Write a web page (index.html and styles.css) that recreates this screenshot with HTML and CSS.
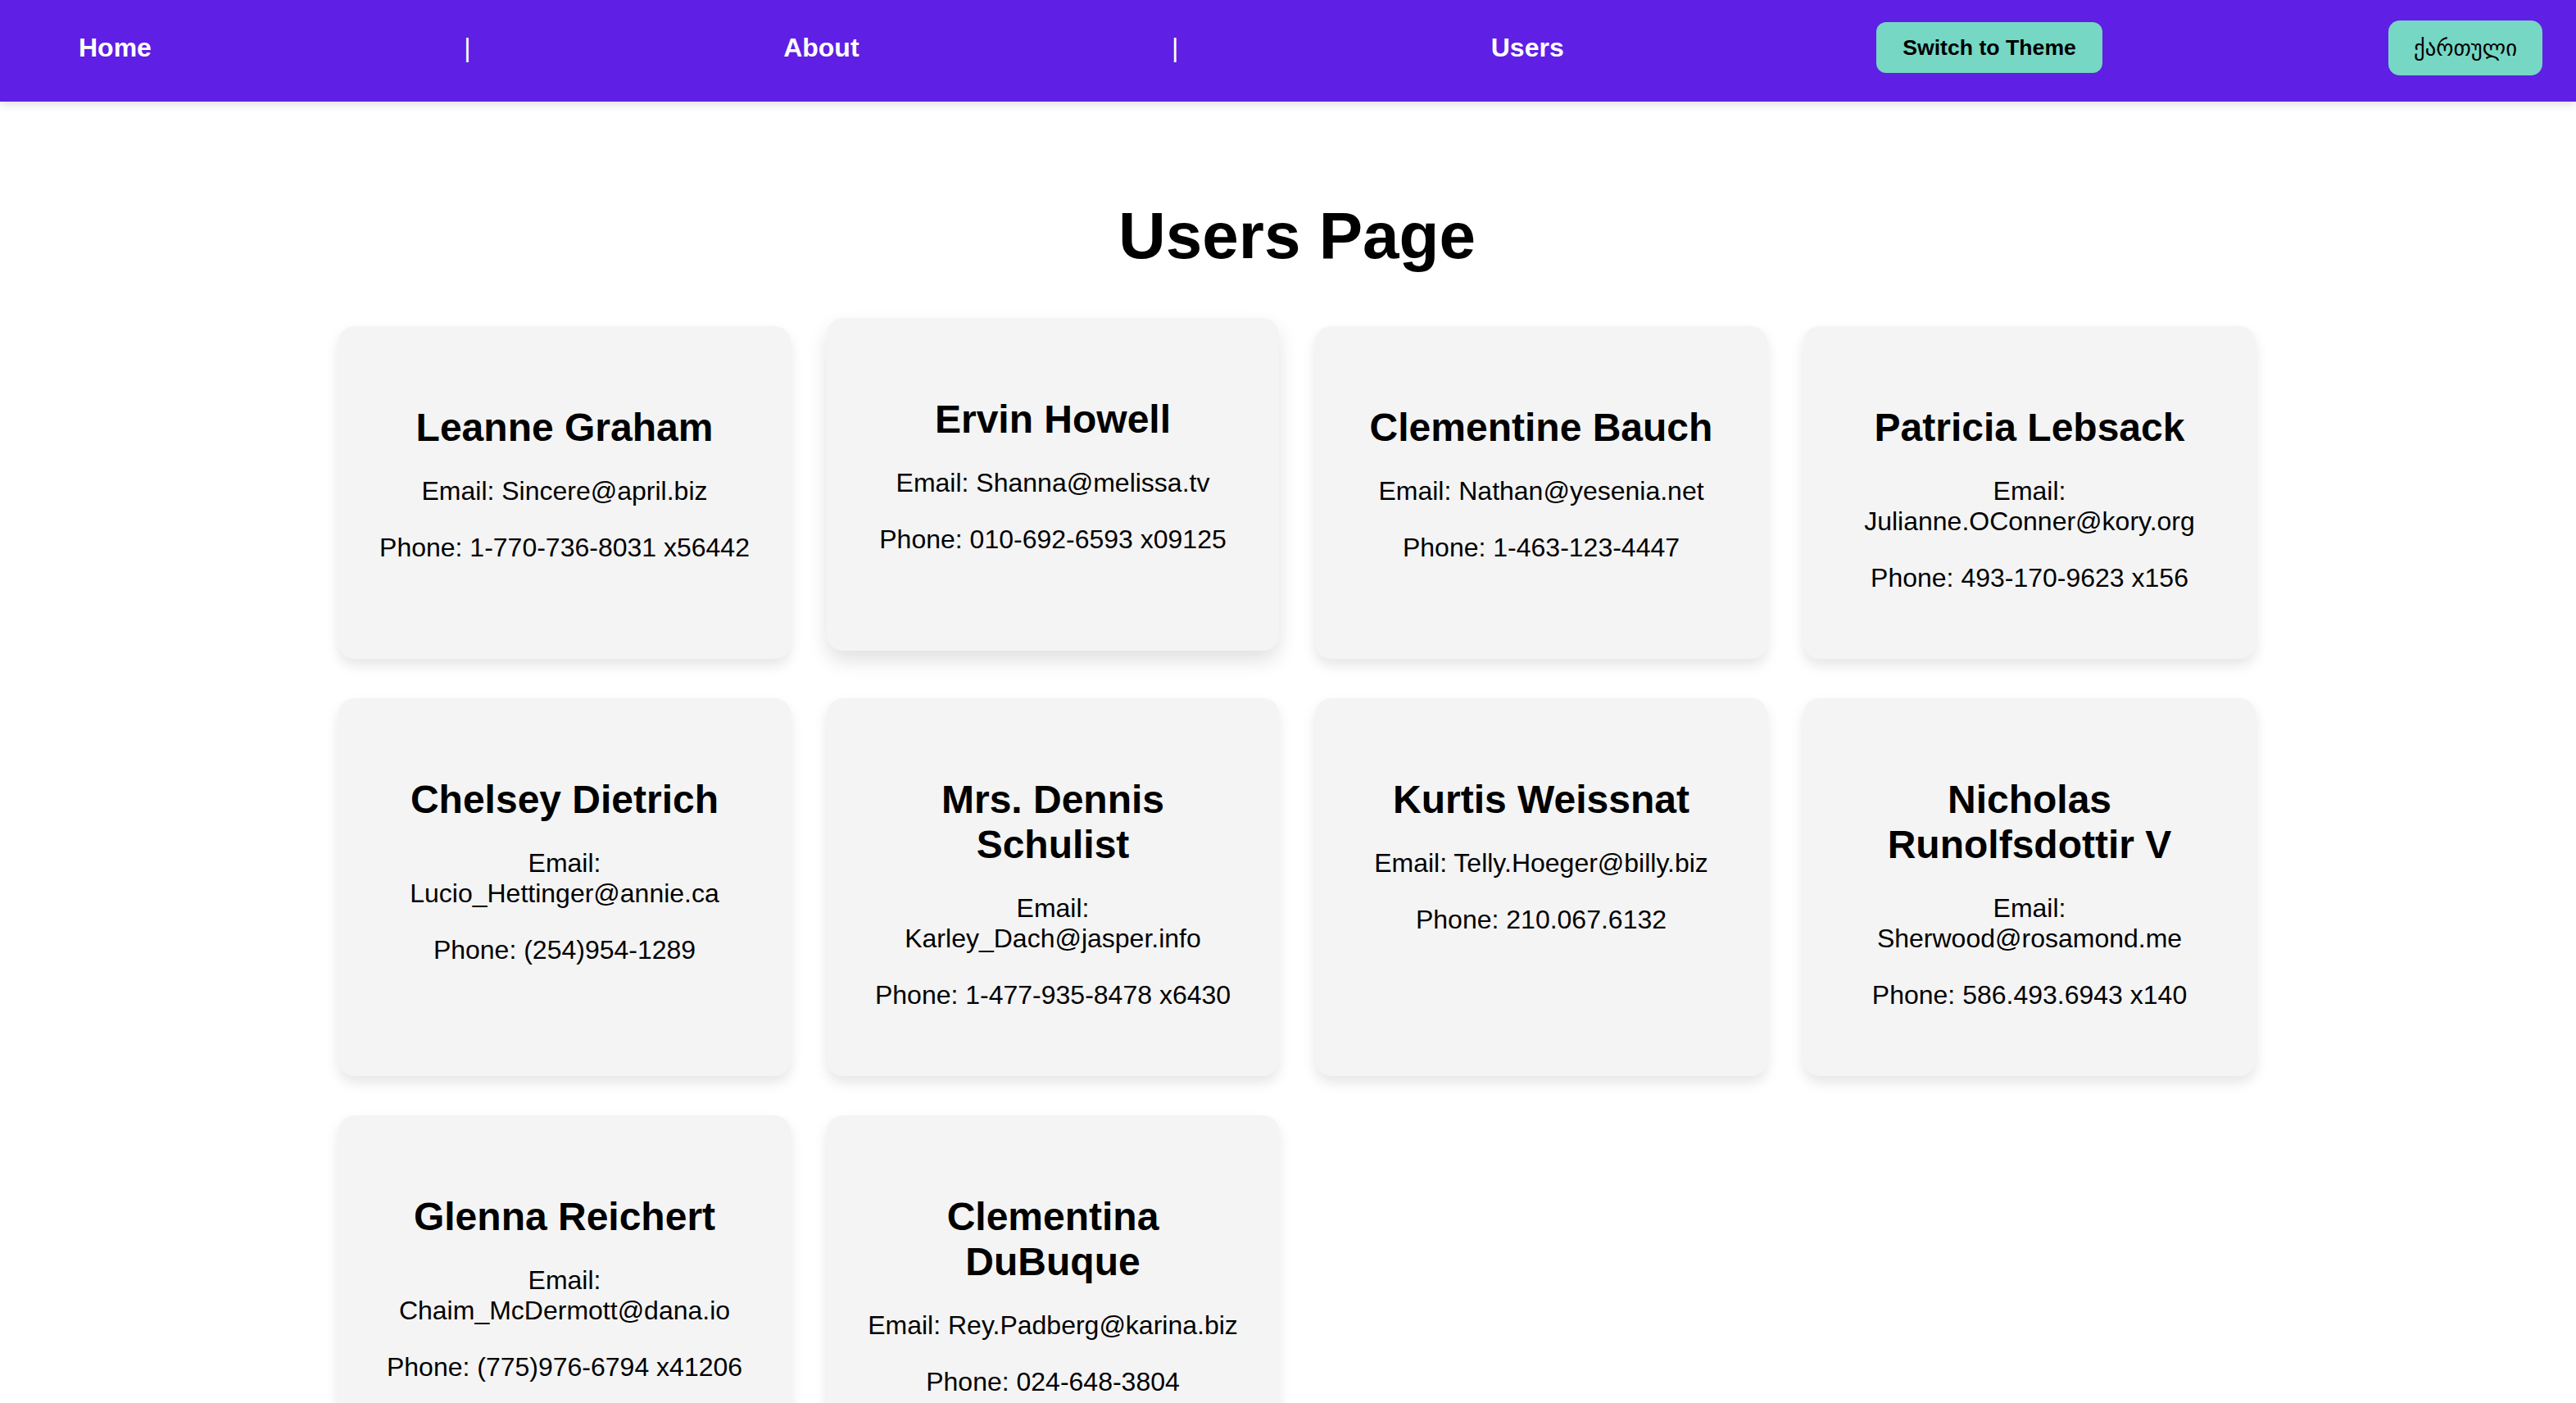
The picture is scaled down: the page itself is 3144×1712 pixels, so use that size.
FILE: index.html
```html
<!DOCTYPE html>
<html lang="en">
<head>
<meta charset="utf-8">
<title>Users Page</title>
<link rel="stylesheet" href="styles.css">
</head>
<body>
<header class="navbar">
  <nav class="nav-links">
    <a class="nav-link" href="#">Home</a>
    <span class="sep">|</span>
    <a class="nav-link" href="#">About</a>
    <span class="sep">|</span>
    <a class="nav-link" href="#">Users</a>
    <button class="theme-btn" type="button">Switch to Theme</button>
  </nav>
  <button class="lang-btn" type="button">ქართული</button>
</header>
<main class="page">
  <h1 class="page-title">Users Page</h1>
  <section class="user-grid">
    <article class="card">
      <h2 class="card-name">Leanne Graham</h2>
      <p class="card-line">Email: Sincere@april.biz</p>
      <p class="card-line">Phone: 1-770-736-8031 x56442</p>
    </article>
    <article class="card card-hover">
      <h2 class="card-name">Ervin Howell</h2>
      <p class="card-line">Email: Shanna@melissa.tv</p>
      <p class="card-line">Phone: 010-692-6593 x09125</p>
    </article>
    <article class="card">
      <h2 class="card-name">Clementine Bauch</h2>
      <p class="card-line">Email: Nathan@yesenia.net</p>
      <p class="card-line">Phone: 1-463-123-4447</p>
    </article>
    <article class="card">
      <h2 class="card-name">Patricia Lebsack</h2>
      <p class="card-line">Email: Julianne.OConner@kory.org</p>
      <p class="card-line">Phone: 493-170-9623 x156</p>
    </article>
    <article class="card">
      <h2 class="card-name">Chelsey Dietrich</h2>
      <p class="card-line">Email: Lucio_Hettinger@annie.ca</p>
      <p class="card-line">Phone: (254)954-1289</p>
    </article>
    <article class="card">
      <h2 class="card-name">Mrs. Dennis Schulist</h2>
      <p class="card-line">Email: Karley_Dach@jasper.info</p>
      <p class="card-line">Phone: 1-477-935-8478 x6430</p>
    </article>
    <article class="card">
      <h2 class="card-name">Kurtis Weissnat</h2>
      <p class="card-line">Email: Telly.Hoeger@billy.biz</p>
      <p class="card-line">Phone: 210.067.6132</p>
    </article>
    <article class="card">
      <h2 class="card-name">Nicholas Runolfsdottir V</h2>
      <p class="card-line">Email: Sherwood@rosamond.me</p>
      <p class="card-line">Phone: 586.493.6943 x140</p>
    </article>
    <article class="card">
      <h2 class="card-name">Glenna Reichert</h2>
      <p class="card-line">Email: Chaim_McDermott@dana.io</p>
      <p class="card-line">Phone: (775)976-6794 x41206</p>
    </article>
    <article class="card">
      <h2 class="card-name">Clementina DuBuque</h2>
      <p class="card-line">Email: Rey.Padberg@karina.biz</p>
      <p class="card-line">Phone: 024-648-3804</p>
    </article>
  </section>
</main>
</body>
</html>
```

FILE: styles.css
```css
* {
  box-sizing: border-box;
}

html, body {
  margin: 0;
  padding: 0;
  background: #ffffff;
  font-family: "Liberation Sans", Arial, "DejaVu Sans", sans-serif;
  color: #000000;
}

.navbar {
  display: flex;
  align-items: center;
  gap: 349px;
  height: 124px;
  padding: 0 41px 8px 96px;
  background: #5f1fe4;
  box-shadow: 0 4px 10px rgba(0, 0, 0, 0.12);
  position: relative;
  z-index: 1;
}

.nav-links {
  flex: 1;
  display: flex;
  align-items: center;
  justify-content: space-between;
}

.nav-link {
  color: #ffffff;
  text-decoration: none;
  font-weight: bold;
  font-size: 32px;
}

.sep {
  color: #ffffff;
  font-size: 32px;
  font-weight: normal;
}

.theme-btn {
  height: 62px;
  padding: 0 32px;
  border: none;
  border-radius: 12px;
  background: #76d7c4;
  color: #000000;
  font-family: "Liberation Sans", Arial, sans-serif;
  font-weight: bold;
  font-size: 26.67px;
}

.lang-btn {
  width: 188px;
  height: 67px;
  padding: 0;
  border: none;
  border-radius: 14px;
  background: #76d7c4;
  color: #000000;
  font-family: "DejaVu Sans", "Noto Sans", sans-serif;
  font-weight: normal;
  font-size: 26.67px;
}

.page {
  padding: 64px 0 0 22px;
}

.page-title {
  margin: 54px 0 64px;
  text-align: center;
  font-size: 80px;
  font-weight: bold;
  line-height: normal;
}

.user-grid {
  display: grid;
  grid-template-columns: repeat(4, 552px);
  column-gap: 44px;
  row-gap: 48px;
  justify-content: center;
}

.card {
  background: #f4f4f4;
  border-radius: 20px;
  padding: 50px 48px 48px;
  text-align: center;
  box-shadow: 0 8px 16px rgba(0, 0, 0, 0.1);
}

.card-hover {
  transform: translateY(-10px);
  box-shadow: 0 12px 24px rgba(0, 0, 0, 0.12);
}

.card-name {
  margin: 46px 0 32px;
  font-size: 48px;
  font-weight: bold;
  line-height: normal;
}

.card-line {
  margin: 32px 0;
  font-size: 32px;
  line-height: normal;
}
```
